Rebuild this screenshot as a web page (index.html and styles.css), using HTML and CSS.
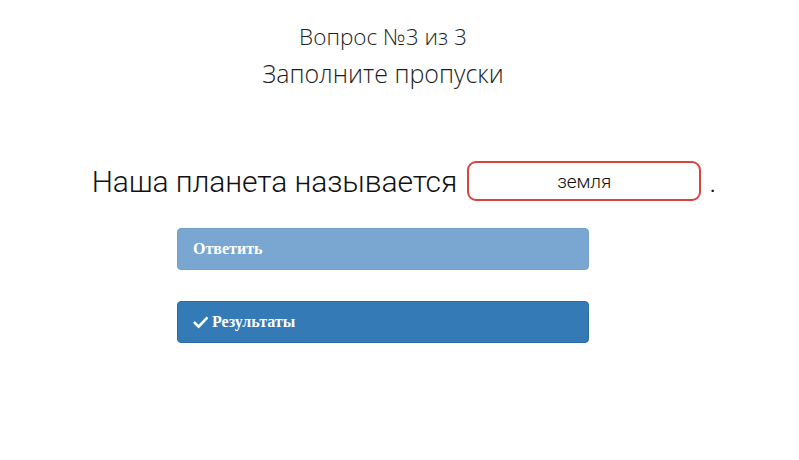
FILE: index.html
```html
<!DOCTYPE html>
<html lang="ru">
<head>
<meta charset="utf-8">
<title>Вопрос №3 из 3</title>
<link rel="stylesheet" href="styles.css">
</head>
<body>
<div class="page">
  <header class="head">
    <div class="counter">Вопрос №3 из 3</div>
    <div class="task">Заполните пропуски</div>
  </header>
  <div class="sentence">
    <span>Наша планета называется</span>
    <span class="gap">земля</span>
    <span class="dot">.</span>
  </div>
  <div class="actions">
    <button class="btn btn-disabled" type="button">Ответить</button>
    <button class="btn btn-primary" type="button">
      <svg class="check" viewBox="0 0 16 16" width="15" height="15" aria-hidden="true"><path d="M2 8.5 L6 12.5 L14.5 3.5" fill="none" stroke="#fff" stroke-width="2.8" stroke-linecap="square"/></svg>Результаты</button>
  </div>
</div>
</body>
</html>
```
FILE: styles.css
```css
html, body { margin: 0; padding: 0; background: #fff; }
.page {
  width: 766px;
  display: flex;
  flex-direction: column;
  align-items: center;
}
.head {
  margin-top: 20px;
  display: flex;
  flex-direction: column;
  align-items: center;
  font-family: "Open Sans", sans-serif;
  font-weight: 300;
  color: #1e1e1e;
}
.counter { font-size: 22.5px; line-height: 34px; }
.task { font-size: 25px; line-height: 38px; }
.sentence {
  margin-top: 69px;
  margin-left: 42px;
  display: flex;
  align-items: center;
  font-family: Roboto, sans-serif;
  font-weight: 300;
  font-size: 30px;
  letter-spacing: -0.1px;
  color: #111;
}
.gap {
  box-sizing: border-box;
  width: 234px;
  height: 40px;
  margin-left: 10px;
  margin-right: 8px;
  border: 2px solid #d9443f;
  border-radius: 9px;
  display: flex;
  align-items: center;
  justify-content: center;
  font-size: 19px;
  font-weight: 300;
  color: #111;
}
.actions {
  margin-top: 27px;
  width: 412px;
  display: flex;
  flex-direction: column;
  gap: 31px;
}
.btn {
  box-sizing: border-box;
  height: 42px;
  width: 100%;
  padding: 0 15px;
  border-radius: 4px;
  border: 1px solid #2e6da4;
  color: #fff;
  font-family: "Liberation Serif", serif;
  font-weight: bold;
  font-size: 16px;
  text-align: left;
  display: flex;
  align-items: center;
}
.btn-disabled { background: #7aa7d1; border-color: #74a0ca; }
.btn-primary { background: #337ab7; }
.check { margin-right: 4px; }
```
